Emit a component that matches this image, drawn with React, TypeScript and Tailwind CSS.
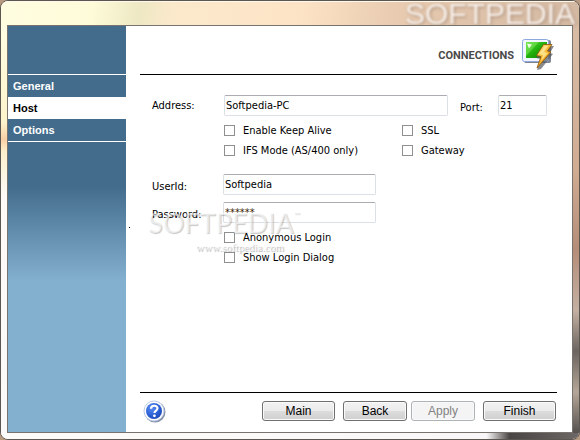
import { useState } from "react";

const navItems = ["General", "Host", "Options"];

function ConnectionIcon() {
  return (
    <svg width="32" height="32" viewBox="0 0 32 32" aria-hidden="true">
      <defs>
        <linearGradient id="screen" x1="0" y1="0" x2="1" y2="1">
          <stop offset="0" stopColor="#5fe03c" />
          <stop offset="0.5" stopColor="#1fae0a" />
          <stop offset="1" stopColor="#0b7d04" />
        </linearGradient>
        <linearGradient id="bolt" x1="0" y1="0" x2="1" y2="1">
          <stop offset="0" stopColor="#ffe98a" />
          <stop offset="0.5" stopColor="#f7b32a" />
          <stop offset="1" stopColor="#c77708" />
        </linearGradient>
      </defs>
      <rect x="2" y="2" width="27" height="23" rx="2" fill="#7d8390" />
      <rect x="0.5" y="1.5" width="26" height="22" rx="2" fill="#f2f6ff" stroke="#8ea8de" />
      <rect x="4" y="4" width="21" height="16" fill="url(#screen)" />
      <path d="M4 4h13L4 18z" fill="#8df06a" opacity="0.45" />
      <path d="M5 5.500l5 1-3 4z" fill="#f0ffe8" />
      <path d="M23 8l9 0-4 7 3 1-12 15-4 1 4-11-5-1z" fill="#555a60" opacity="0.7" />
      <path d="M21.500 6.500L30 6.500L25.500 13L29 14L15 30L19 18.500L14.500 17.500z" fill="url(#bolt)" stroke="#8a5208" strokeWidth="0.8" />
      <path d="M22.500 8l4-.5-4.500 6.500 4 1-7 8 2-6-4-1z" fill="#fff0a8" opacity="0.7" />
    </svg>
  );
}

function HelpIcon() {
  return (
    <svg width="23" height="23" viewBox="0 0 23 23" aria-hidden="true">
      <defs>
        <radialGradient id="help" cx="0.35" cy="0.3" r="0.8">
          <stop offset="0" stopColor="#5b8df0" />
          <stop offset="0.6" stopColor="#2a5fd6" />
          <stop offset="1" stopColor="#1b45ae" />
        </radialGradient>
      </defs>
      <circle cx="12" cy="12" r="10.500" fill="#8591a8" />
      <circle cx="11" cy="11" r="10" fill="#fff" stroke="#bccbe4" />
      <circle cx="11" cy="11" r="8" fill="url(#help)" />
      <path d="M8 8.800c0-4 6.500-4 6.500-.5 0 2.300-3 2.200-3 4.700" fill="none" stroke="#fff" strokeWidth="2.200" />
      <circle cx="11.400" cy="15.800" r="1.400" fill="#fff" />
    </svg>
  );
}

function CheckField({ id, label }: { id: string; label: string }) {
  return (
    <div className="flex h-5 items-center gap-2">
      <input
        id={id}
        type="checkbox"
        className="h-[11px] w-[11px] shrink-0 appearance-none border border-[#8e8f8f] bg-white checked:bg-[#436c8c]"
      />
      <label htmlFor={id} className="whitespace-nowrap pt-px">
        {label}
      </label>
    </div>
  );
}

const inputClass =
  "h-[21px] min-w-0 rounded-[2px] border border-[#dbdfe6] border-t-[#abadb3] bg-white px-px pb-px outline-none";

const buttonClass =
  "h-5 rounded-[3px] border border-[#707070] bg-[linear-gradient(#f2f2f2,#ebebeb_50%,#dddddd_50%,#cfcfcf)] font-['Liberation_Sans',sans-serif] text-xs leading-4 text-black shadow-[inset_0_0_0_1px_#fafafa] disabled:border-[#adb2b5] disabled:bg-[#f4f4f4] disabled:bg-none disabled:text-[#838383]";

export default function App() {
  const [active, setActive] = useState("Host");
  const [address, setAddress] = useState("Softpedia-PC");
  const [port, setPort] = useState("21");
  const [userId, setUserId] = useState("Softpedia");
  const [password, setPassword] = useState("******");

  return (
    <div className="flex min-h-screen bg-[#b79a80] font-['DejaVu_Sans_Condensed','DejaVu_Sans',sans-serif] text-[11px] leading-4 text-black">
      <div className="flex flex-1 flex-col overflow-hidden rounded-lg border border-[#5c5650] bg-[#fbf8f6]">
        {/* Title bar */}
        <div className="flex h-6 items-center justify-end border-t border-[#fff8ec] bg-[linear-gradient(100deg,#fffde0,#fdfbd8_16%,#eee8c4_24%,#fbe9cb_30%,#fde3c6_52%,#e8cbb0_68%,#d3b8a2)] pr-1">
          <span className="font-['Liberation_Sans',sans-serif] text-[30px] leading-6 text-[#f8f0ea] blur-[1px] [text-shadow:1px_1px_3px_#a08470]">
            SOFTPEDIA
          </span>
        </div>

        <div className="flex flex-1">
          <div className="w-[6px] bg-[linear-gradient(#fffde2,#fdf3cc_24%,#f8cfa4_28%,#fdf0cc_31%,#fdfaf8_42%,#fbf9f9)]" />

          {/* Window body */}
          <div className="relative flex flex-1 border border-[#77736e] bg-white">
            <aside className="flex w-[118px] shrink-0 flex-col bg-[linear-gradient(#436c8c_160px,#84b0d0_255px)] pt-12">
              <nav className="flex flex-col border-y border-white font-['Liberation_Sans',sans-serif] font-bold">
                {navItems.map((item) => (
                  <button
                    key={item}
                    type="button"
                    onClick={() => setActive(item)}
                    className={
                      item === active
                        ? "h-[22px] bg-white px-[5px] text-left text-black"
                        : "h-[22px] px-[5px] text-left text-white"
                    }
                  >
                    {item}
                  </button>
                ))}
              </nav>
            </aside>

            <main className="flex min-w-0 flex-1 flex-col pl-[14px] pr-[15px]">
              <header className="flex h-[49px] items-center justify-end gap-2 border-b border-black pr-[3px] pt-2">
                <h1 className="pt-1 font-['Roboto',sans-serif] text-[11px] font-bold text-[#4a4a4a]">CONNECTIONS</h1>
                <ConnectionIcon />
              </header>

              <form className="flex-1 pl-3 pr-[10px] pt-5">
                <div className="flex items-end">
                  <label htmlFor="address" className="w-[72px] shrink-0 self-center">
                    Address:
                  </label>
                  <input
                    id="address"
                    className={`${inputClass} flex-1`}
                    value={address}
                    onChange={(e) => setAddress(e.target.value)}
                  />
                  <label htmlFor="port" className="ml-3 w-[38px] shrink-0">
                    Port:
                  </label>
                  <input
                    id="port"
                    className={`${inputClass} w-[49px]`}
                    value={port}
                    onChange={(e) => setPort(e.target.value)}
                  />
                </div>

                <div className="mt-1 grid grid-cols-[178px_1fr] pl-[72px]">
                  <CheckField id="keep-alive" label="Enable Keep Alive" />
                  <CheckField id="ssl" label="SSL" />
                  <CheckField id="ifs-mode" label="IFS Mode (AS/400 only)" />
                  <CheckField id="gateway" label="Gateway" />
                </div>

                <div className="mt-[14px] flex flex-col gap-[7px]">
                  <div className="flex items-end">
                    <label htmlFor="user-id" className="w-[71px] shrink-0">
                      UserId:
                    </label>
                    <input
                      id="user-id"
                      className={`${inputClass} w-[153px]`}
                      value={userId}
                      onChange={(e) => setUserId(e.target.value)}
                    />
                  </div>
                  <div className="flex items-end">
                    <label htmlFor="password" className="w-[71px] shrink-0">
                      Password:
                    </label>
                    <input
                      id="password"
                      className={`${inputClass} w-[153px] text-[#3a2000]`}
                      value={password}
                      onChange={(e) => setPassword(e.target.value)}
                    />
                  </div>
                </div>

                <div className="mt-1 pl-[72px]">
                  <CheckField id="anonymous" label="Anonymous Login" />
                  <CheckField id="login-dialog" label="Show Login Dialog" />
                </div>
              </form>

              <footer className="flex h-10 items-center gap-2 border-t border-black pb-[3px] pl-[3px] pr-px">
                <button type="button" aria-label="Help" className="mr-auto">
                  <HelpIcon />
                </button>
                <button type="button" className={`${buttonClass} w-[73px]`}>
                  Main
                </button>
                <div className="flex gap-1">
                  <button type="button" className={`${buttonClass} w-16`}>
                    Back
                  </button>
                  <button type="button" disabled className={`${buttonClass} w-16`}>
                    Apply
                  </button>
                </div>
                <button type="button" className={`${buttonClass} w-[73px]`}>
                  Finish
                </button>
              </footer>
            </main>

            {/* Watermark over the form */}
            <div className="pointer-events-none absolute left-[140px] top-[183px] w-[184px] text-center text-white/60">
              <div className="flex items-start font-['Lato',sans-serif] text-[27px] leading-7 [text-shadow:1px_1px_1px_#00000038]">
                SOFTPEDIA<span className="text-[8px] leading-3">™</span>
              </div>
              <div className="font-['Liberation_Serif',serif] leading-5 [text-shadow:1px_1px_1px_#00000050]">
                www.softpedia.com
              </div>
            </div>
            <span className="absolute left-[121px] top-[201px] h-px w-px bg-black" />
          </div>

          <div className="w-[6px] bg-[linear-gradient(#d8bca6,#d0ac92_35%,#b58d78_55%,#c4b0a2_70%,#6b6460_80%,#b5a698_90%,#55504e)]" />
        </div>

        <div className="h-[6px] bg-[linear-gradient(90deg,#fdfbfa,#faf7f8_84%,#4a4646_88%,#6d6765)]" />
      </div>
    </div>
  );
}
